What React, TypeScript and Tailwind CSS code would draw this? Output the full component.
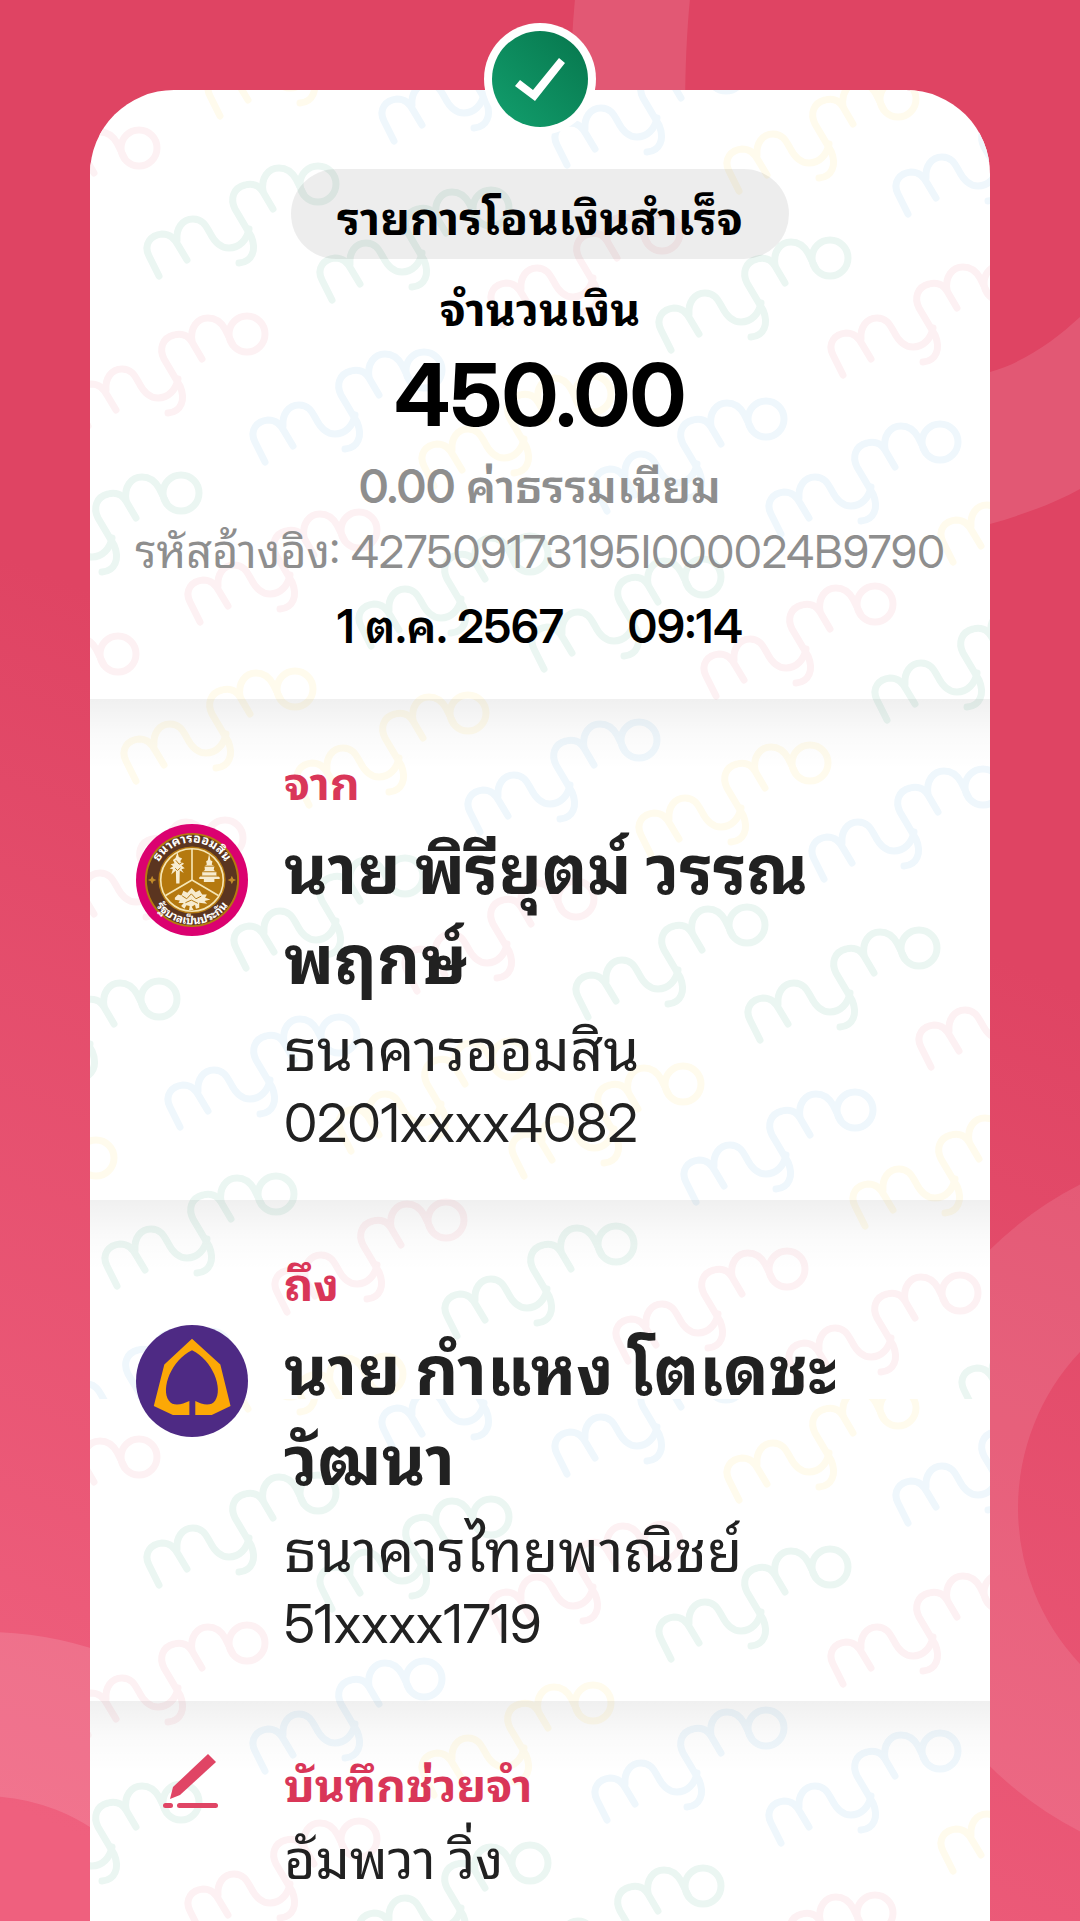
import type { ReactNode } from 'react';

type Tint = 'green' | 'red' | 'blue' | 'yellow';

const tints: Record<Tint, string> = {
  green: '#ebf6f2',
  red: '#fdf1f3',
  blue: '#eff7fc',
  yellow: '#fffbed',
};

const marks: [number, number, Tint][] = [
  [220, 116, 'yellow'], [394, 141, 'blue'], [567, 165, 'blue'], [739, 191, 'yellow'], [908, 214, 'blue'],
  [-20, 240, 'red'], [159, 276, 'green'], [332, 300, 'green'], [503, 325, 'red'], [671, 350, 'green'], [843, 375, 'red'],
  [88, 426, 'red'], [265, 462, 'blue'], [434, 486, 'yellow'], [607, 511, 'blue'], [781, 534, 'blue'], [953, 562, 'yellow'],
  [22, 585, 'green'], [200, 622, 'red'], [371, 646, 'green'], [544, 669, 'green'], [716, 696, 'red'], [887, 720, 'green'],
  [-41, 746, 'red'], [136, 781, 'yellow'], [309, 805, 'yellow'], [480, 832, 'blue'], [651, 855, 'yellow'], [824, 879, 'blue'],
  [66, 930, 'red'], [246, 968, 'green'], [417, 991, 'red'], [588, 1017, 'green'], [760, 1040, 'green'], [931, 1067, 'red'],
  [0, 1091, 'green'], [180, 1127, 'blue'], [351, 1151, 'yellow'], [524, 1176, 'yellow'], [696, 1202, 'blue'], [865, 1226, 'yellow'],
  [-63, 1250, 'yellow'], [117, 1286, 'green'], [287, 1312, 'red'], [457, 1336, 'green'], [628, 1361, 'red'], [801, 1385, 'red'], [974, 1410, 'green'],
  [52, 1441, 'blue'], [226, 1466, 'yellow'],
];

function Watermark() {
  return (
    <svg className="absolute inset-0 h-full w-full" aria-hidden="true">
      <defs>
        <g id="mark" fill="none" strokeWidth="7" strokeLinecap="round" strokeLinejoin="round">
          <path d="M0 0 L-10 -20 C-16 -32 -8 -41 3 -42 C11 -42 15 -38 19 -31 L28 -16" />
          <path d="M18 -36 C17 -47 23 -57 34 -57 C44 -57 47 -50 51 -43 C56 -33 62 -28 70 -28 C80 -28 88 -36 90 -47" />
          <path d="M114 -67 L104 -84 C100 -91 93 -93 86 -91 C74 -88 71 -77 76 -67 L92 -40 C98 -26 93 -14 80 -13" />
          <path d="M104 -85 C102 -98 109 -108 120 -108 C128 -108 133 -104 137 -97 L145 -81" />
          <circle cx="159" cy="-92" r="18" />
        </g>
        <pattern id="marks" width="1080" height="1309" patternUnits="userSpaceOnUse">
          {marks.map(([x, y, tint]) => (
            <use key={`${x}-${y}`} href="#mark" x={x - 90} y={y - 90} stroke={tints[tint]} />
          ))}
        </pattern>
      </defs>
      <rect width="100%" height="100%" fill="url(#marks)" />
    </svg>
  );
}

function Backdrop() {
  return (
    <svg
      className="absolute inset-0 h-full w-full"
      viewBox="0 0 1080 1921"
      preserveAspectRatio="xMidYMid slice"
      aria-hidden="true"
    >
      <path
        d="M577 -20C570 40 570 90 573 140C590 420 850 570 990 524C1025 514 1055 503 1080 489L1400 400L1400 200L1080 317C1055 340 1025 362 990 372C850 410 700 300 686 140C684 90 686 30 692 -20Z"
        fill="#fff"
        fillOpacity="0.11"
      />
      <circle cx="1245" cy="1508" r="295" fill="none" stroke="#fff" strokeOpacity="0.1" strokeWidth="136" />
      <circle cx="-16" cy="1992" r="278" fill="none" stroke="#fff" strokeOpacity="0.13" strokeWidth="164" />
    </svg>
  );
}

function SuccessBadge() {
  return (
    <svg className="block size-28" viewBox="0 0 112 112" role="img" aria-label="สำเร็จ">
      <defs>
        <linearGradient id="badge" x1="0" y1="1" x2="1" y2="0">
          <stop offset="0.1" stopColor="#119b6a" />
          <stop offset="0.9" stopColor="#087a50" />
        </linearGradient>
      </defs>
      <circle cx="56" cy="56" r="56" fill="#fff" />
      <circle cx="56" cy="56" r="48" fill="url(#badge)" />
      <path d="M31 63l5-6 13 10 26-32 6 5-30 38z" fill="#fff" />
    </svg>
  );
}

function SavingsBankLogo() {
  return (
    <svg className="block size-28 shrink-0" viewBox="0 0 340 340" role="img" aria-label="ธนาคารออมสิน">
      <defs>
        <path id="arcTop" d="M56 170A114 114 0 0 1 284 170" />
        <path id="arcBottom" d="M35 170A135 135 0 0 0 305 170" />
      </defs>
      <circle cx="170" cy="170" r="170" fill="#db0170" />
      <circle cx="170" cy="170" r="143" fill="#b5790f" />
      <circle cx="170" cy="170" r="137" fill="#5b3520" />
      <circle cx="170" cy="170" r="102" fill="#b5790f" />
      <circle cx="170" cy="170" r="95" fill="#b5790f" stroke="#f6e6b4" strokeWidth="5" />
      <path d="M170 76V170M170 170L90 217M170 170L250 217" stroke="#f6e6b4" strokeWidth="5" fill="none" />
      <g fill="#f7ecd0">
        <path d="M126 86l4 14 10 5-6 8 12 8-8 5 10 8-10 3 7 12-12-8-1 40h-10l-1-40-14 12 5-16-10-2 11-7-8-6 12-3-5-10 8-6z" />
        <path d="M222 90l4 20 6 3-2 10 8 5-2 12 8 6v10l10 6v5h-16v9h-32v-9h-14v-5l9-6v-10l8-6-1-12 7-5-2-10 5-3z" />
        <path d="M118 224l10-10 10 3 6-14 12 6 13-15 12 13 12-6 8 13 14 0-5 10 16 5-18 5 8 8-24-3 0 15-10 3-3-12-10 6 6 10h-14l2-12-10-2-6 10-10-8 8-9-16 0 4-8-15-2z" />
      </g>
      <g fill="none" stroke="#b5790f" strokeWidth="3">
        <path d="M121 110l10 12 10-6M119 134l7 7 9-8M206 128h32M201 145h42M197 158h52M140 218l14 9 14-15 14 15 16-8M150 239l18-8 20 10" />
      </g>
      <path d="M49 157l4 9 9 4-9 4-4 9-4-9-9-4 9-4zM291 157l4 9 9 4-9 4-4 9-4-9-9-4 9-4z" fill="#c08a2a" />
      <g className="font-bold" fill="#fff" textAnchor="middle">
        <text fontSize="38"><textPath href="#arcTop" startOffset="50%">ธนาคารออมสิน</textPath></text>
        <text fontSize="35"><textPath href="#arcBottom" startOffset="50%">รัฐบาลเป็นประกัน</textPath></text>
      </g>
    </svg>
  );
}

function CommercialBankLogo() {
  return (
    <svg className="block size-28 shrink-0" viewBox="0 0 340 340" role="img" aria-label="ธนาคารไทยพาณิชย์">
      <circle cx="170" cy="170" r="170" fill="#4e2a84" />
      <path
        d="M170 42L256 120L287 246L230 273H180V231C200 242 228 248 240 230C266 194 232 106 170 77C108 106 74 194 100 230C112 248 140 242 162 231V273H112L54 246L86 120Z"
        fill="#fca806"
      />
    </svg>
  );
}

function PencilIcon() {
  return (
    <svg className="block h-14 w-28 shrink-0" viewBox="0 0 112 56" fill="#e04565" aria-hidden="true">
      <path d="M72 1l8 8-36 33-10 4 3-12z" />
      <rect x="27" y="50" width="10" height="5" rx="2.5" />
      <rect x="41" y="50" width="41" height="5" rx="2.5" />
    </svg>
  );
}

function Party({ label, name, bank, account, logo }: { label: string; name: string; bank: string; account: string; logo: ReactNode }) {
  return (
    <section className="flex gap-9 bg-linear-to-b from-black/6 via-black/2 via-7% to-transparent to-14% pr-20 pb-[41px] pl-[46px]">
      <div className="pt-[125px]">{logo}</div>
      <div className="min-w-0 flex-1 pt-[54px]">
        <h2 className="text-[46px] leading-[60px] font-bold text-[#d93658]">{label}</h2>
        <p className="mt-3 text-[67px] leading-[90px] font-bold">{name}</p>
        <p className="mt-2 text-[58px] leading-[74px]">{bank}</p>
        <p className="text-[54px] leading-[72px]">{account}</p>
      </div>
    </section>
  );
}

export default function App() {
  return (
    <div className="relative flex min-h-screen flex-col overflow-hidden bg-linear-[202deg] from-[#df4463] from-42% to-[#ef607e] to-95% px-[90px] pt-[23px] font-['Inter_Display','Inter','Noto_Sans_Thai_Looped',sans-serif]">
      <Backdrop />
      <div className="relative z-10 -mb-[45px] flex justify-center">
        <SuccessBadge />
      </div>
      <main className="relative flex-1 overflow-hidden rounded-t-[84px] bg-white text-[#212121]">
        <Watermark />
        <div className="relative">
          <header className="flex flex-col items-center px-4 pt-[79px] pb-10 text-black">
            <h1 className="flex h-[90px] items-center rounded-full bg-black/7 px-[46px] pt-2 text-[46px] font-bold">รายการโอนเงินสำเร็จ</h1>
            <p className="mt-5 text-[46px] leading-[60px] font-bold">จำนวนเงิน</p>
            <p className="mt-2 text-[86px] leading-[96px] font-bold">450.00</p>
            <p className="mt-[10px] text-[46px] leading-[66px] font-semibold text-[#8e8e8e]">0.00 ค่าธรรมเนียม</p>
            <p className="text-[45px] leading-[66px] whitespace-nowrap text-[#8e8e8e]">รหัสอ้างอิง: 427509173195I000024B9790</p>
            <p className="mt-2 flex gap-16 text-[46px] leading-[66px] font-semibold">
              <span>1 ต.ค. 2567</span>
              <time>09:14</time>
            </p>
          </header>
          <Party label="จาก" name="นาย พิรียุตม์ วรรณพฤกษ์" bank="ธนาคารออมสิน" account="0201xxxx4082" logo={<SavingsBankLogo />} />
          <Party label="ถึง" name="นาย กำแหง โตเดชะวัฒนา" bank="ธนาคารไทยพาณิชย์" account="51xxxx1719" logo={<CommercialBankLogo />} />
          <section className="flex gap-9 bg-linear-to-b from-black/6 via-black/2 via-16% to-transparent to-32% pr-20 pb-6 pl-[46px]">
            <div className="pt-[52px]"><PencilIcon /></div>
            <div className="min-w-0 flex-1 pt-[54px]">
              <h2 className="text-[46px] leading-[60px] font-bold text-[#d93658]">บันทึกช่วยจำ</h2>
              <p className="mt-2 text-[54px] leading-[74px]">อัมพวา วิ่ง</p>
            </div>
          </section>
        </div>
      </main>
    </div>
  );
}
